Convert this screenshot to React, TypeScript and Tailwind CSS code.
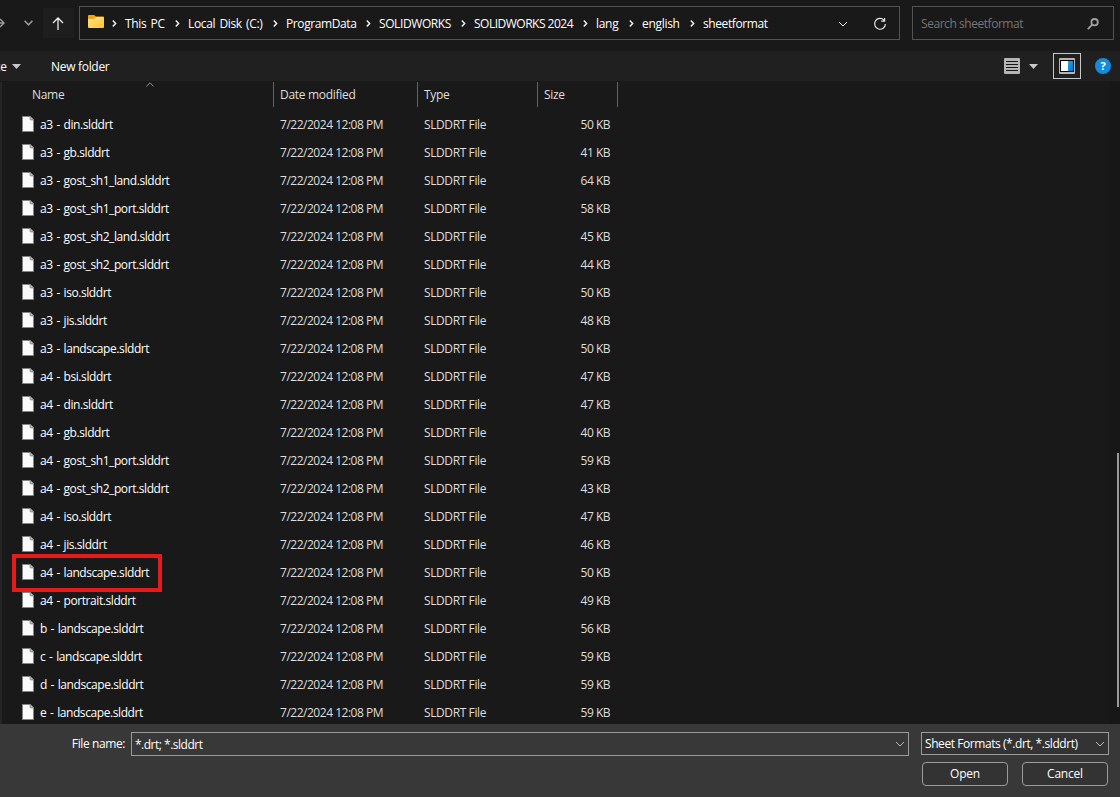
import React from 'react';

const crumbs = [
  { label: 'This PC', style: 'w-[40px] tracking-[-0.35px] [word-spacing:1.5px]' },
  { label: 'Local Disk (C:)', style: 'w-[75px] tracking-[-0.35px] [word-spacing:1.5px]' },
  { label: 'ProgramData', style: 'w-[70px] tracking-[-0.4px]' },
  { label: 'SOLIDWORKS', style: 'w-[72px] tracking-[-0.4px]' },
  { label: 'SOLIDWORKS 2024', style: 'w-[99px] tracking-[-0.5px]' },
  { label: 'lang', style: 'w-[23px] tracking-[-0.3px]' },
  { label: 'english', style: 'w-[38px] tracking-[-0.3px]' },
  { label: 'sheetformat', style: 'w-[65px] tracking-[-0.4px]' }
];

const files = [
  { name: 'a3 - din.slddrt', size: 50 },
  { name: 'a3 - gb.slddrt', size: 41 },
  { name: 'a3 - gost_sh1_land.slddrt', size: 64 },
  { name: 'a3 - gost_sh1_port.slddrt', size: 58 },
  { name: 'a3 - gost_sh2_land.slddrt', size: 45 },
  { name: 'a3 - gost_sh2_port.slddrt', size: 44 },
  { name: 'a3 - iso.slddrt', size: 50 },
  { name: 'a3 - jis.slddrt', size: 48 },
  { name: 'a3 - landscape.slddrt', size: 50 },
  { name: 'a4 - bsi.slddrt', size: 47 },
  { name: 'a4 - din.slddrt', size: 47 },
  { name: 'a4 - gb.slddrt', size: 40 },
  { name: 'a4 - gost_sh1_port.slddrt', size: 59 },
  { name: 'a4 - gost_sh2_port.slddrt', size: 43 },
  { name: 'a4 - iso.slddrt', size: 47 },
  { name: 'a4 - jis.slddrt', size: 46 },
  { name: 'a4 - landscape.slddrt', size: 50, marked: true },
  { name: 'a4 - portrait.slddrt', size: 49 },
  { name: 'b - landscape.slddrt', size: 56 },
  { name: 'c - landscape.slddrt', size: 59 },
  { name: 'd - landscape.slddrt', size: 59 },
  { name: 'e - landscape.slddrt', size: 59 }
];

const ChevronDown = ({ className = '' }: { className?: string }) => (
  <svg className={className} width="10" height="6" viewBox="0 0 10 6" fill="none" stroke="currentColor">
    <path d="M1 1l4 4 4-4" />
  </svg>
);

const Separator = () => (
  <svg className="shrink-0 ml-[10px] mr-[8px]" width="5" height="7" viewBox="0 0 5 7" fill="none" stroke="#f0f0f0" strokeWidth="1.5">
    <path d="M.8.6l2.8 2.9L.8 6.4" />
  </svg>
);

const Caret = () => (
  <svg width="9" height="5" viewBox="0 0 9 5" fill="#c8c8c8">
    <path d="M0 0h9L4.5 5z" />
  </svg>
);

const FileIcon = () => (
  <svg className="-mt-[2px] shrink-0" width="12" height="16" viewBox="0 0 12 16">
    <path d="M.5.5h7.7l3.3 3.3v11.7H.5z" fill="#fafafa" stroke="#858585" />
    <path d="M8.2.5v3.3h3.3z" fill="#d0d0d0" stroke="#858585" />
  </svg>
);

const FolderIcon = () => (
  <svg className="shrink-0" width="16" height="13" viewBox="0 0 16 13">
    <defs>
      <linearGradient id="folder" x1="0" y1="0" x2="1" y2="1">
        <stop offset="0" stopColor="#ffe08a" />
        <stop offset="1" stopColor="#ffc62f" />
      </linearGradient>
    </defs>
    <path d="M0 1a1 1 0 011-1h5.2l1.6 1.5H15a1 1 0 011 1V6H0z" fill="#f3a60a" />
    <path d="M0 4h5.8l2-2H15a1 1 0 011 1v9a1 1 0 01-1 1H1a1 1 0 01-1-1z" fill="url(#folder)" />
  </svg>
);

const NavBar = () => (
  <div className="flex h-[51px] shrink-0 pt-[6px]">
    <div className="flex h-[34px] w-[43px] shrink-0 items-center text-[#999]">
      <svg width="5" height="10" viewBox="0 0 5 10" fill="none" stroke="currentColor" strokeWidth="1.5">
        <path d="M0 1l4 4-4 4M0 5h4" />
      </svg>
      <svg className="ml-[19px]" width="9" height="6" viewBox="0 0 9 6" fill="none" stroke="currentColor" strokeWidth="1.6">
        <path d="M.6.8l3.9 4 3.9-4" />
      </svg>
    </div>
    <div className="mt-[2px] flex h-[30px] w-[31px] shrink-0 items-center justify-center bg-[#1e1e1e]">
      <svg className="-ml-[2px]" width="12" height="13" viewBox="0 0 12 13" fill="none" stroke="#f2f2f2" strokeWidth="1.25">
        <path d="M6 13V1M1 6l5-5 5 5" />
      </svg>
    </div>
    <div className="ml-[5px] flex h-[34px] w-[821px] shrink-0 items-center border border-[#535353] pl-[8px] text-white">
      <div className="-mt-[3px]"><FolderIcon /></div>
      <div className="-ml-[2px] mt-px flex items-center">
        {crumbs.map(crumb => (
          <React.Fragment key={crumb.label}>
            <Separator />
            <span className={`${crumb.style} shrink-0 whitespace-nowrap`}>{crumb.label}</span>
          </React.Fragment>
        ))}
      </div>
      <ChevronDown className="ml-auto mt-px" />
      <svg className="ml-[25px] mr-[12px] mt-px" width="14" height="14" viewBox="0 0 14 14" fill="none" stroke="#e5e5e5" strokeWidth="1.2">
        <path d="M10.9 3.1A5.4 5.4 0 1012.4 7M11.6 1v3.2H8.2" />
      </svg>
    </div>
    <div className="ml-[12px] flex h-[34px] w-[202px] shrink-0 items-center justify-between border border-[#535353] pl-[8px] pr-[14px] text-[#777]">
      <span className="mt-px tracking-[-0.45px]">Search sheetformat</span>
      <svg className="mt-px" width="12" height="12" viewBox="0 0 12 12" fill="none" stroke="#a0a0a0" strokeWidth="1.8">
        <circle cx="7.6" cy="4.2" r="3.2" />
        <path d="M5.2 6.7L.8 11.2" />
      </svg>
    </div>
  </div>
);

const Toolbar = () => (
  <div className="flex h-[30px] shrink-0 items-center bg-[#202020] text-white">
    <span className="mt-px flex w-[7px] justify-end">te</span>
    <div className="ml-[5px] mt-px"><Caret /></div>
    <span className="ml-[30px] mt-px tracking-[-0.3px]">New folder</span>
    <svg className="ml-auto" width="16" height="16" viewBox="0 0 16 16">
      <rect width="16" height="16" rx="1" fill="#b5b5b5" />
      <path d="M2 3.5h12M2 6.5h12M2 9.5h12M2 12.5h12" stroke="#151515" />
    </svg>
    <div className="ml-[9px] mt-px"><Caret /></div>
    <div className="ml-[15px] flex h-[26px] w-[28px] items-center justify-center border border-[#c8c8c8]">
      <svg width="16" height="16" viewBox="0 0 16 16">
        <defs>
          <linearGradient id="pane" x1="0" y1="0" x2="1" y2="1">
            <stop offset="0" stopColor="#2aa4e8" />
            <stop offset="1" stopColor="#0871d0" />
          </linearGradient>
        </defs>
        <rect width="16" height="16" rx="1" fill="#b5b5b5" />
        <path d="M1 2h14v12H1z" fill="#080808" />
        <path d="M2 3h7v10H2z" fill="#fff" />
        <path d="M9 3h5v10H9z" fill="url(#pane)" />
      </svg>
    </div>
    <div className="ml-[14px] mr-[9px] flex h-4 w-4 items-center justify-center rounded-full bg-[#148bdc] text-[11px] font-bold leading-4">?</div>
  </div>
);

const ColumnHeader = () => (
  <div className="flex h-[29px] tracking-[-0.3px] text-[#dedede]">
    <div className="relative flex h-[25px] w-[272px] items-center border-r border-[#636363] pl-[30px]">
      Name
      <svg className="absolute left-[144px] top-0" width="8" height="5" viewBox="0 0 8 5" fill="none" stroke="#999">
        <path d="M.4 4.4L4 .8l3.6 3.6" />
      </svg>
    </div>
    <div className="flex h-[25px] w-[144px] items-center border-r border-[#636363] pl-[6px]">Date modified</div>
    <div className="flex h-[25px] w-[120px] items-center border-r border-[#636363] pl-[6px]">Type</div>
    <div className="flex h-[25px] w-[80px] items-center border-r border-[#636363] pl-[6px]">Size</div>
  </div>
);

const FileList = () => (
  <div className="flex min-h-0 flex-1 border-t border-[#191919]">
    <div className="w-[2px] shrink-0 bg-[#252525]" />
    <div className="flex-1 overflow-hidden bg-[#191919]">
      <ColumnHeader />
      {files.map(file => (
        <div key={file.name} className="relative flex h-7 items-center whitespace-nowrap text-[#dedede]">
          {file.marked && (
            <div className="absolute -top-[5px] left-[10px] h-[38px] w-[150px] border-4 border-[#e51b1b]" />
          )}
          <div className="flex w-[278px] items-center pl-[20px] text-white">
            <FileIcon />
            <span className="ml-[6px] tracking-[-0.42px] [word-spacing:1px]">{file.name}</span>
          </div>
          <span className="w-[144px] tracking-[-0.48px]">7/22/2024 12:08 PM</span>
          <span className="w-[120px] tracking-[-0.4px]">SLDDRT File</span>
          <span className="w-[66px] text-right tracking-[-0.5px]">{file.size} KB</span>
        </div>
      ))}
    </div>
    <div className="flex w-[11px] shrink-0 items-end justify-end bg-[#171717] pb-[17px] pr-px">
      <div className="h-[254px] w-[2px] bg-[#9a9a9a]" />
    </div>
  </div>
);

const Footer = () => (
  <div className="flex h-[73px] shrink-0 bg-[#383838] pt-[8px] text-white">
    <span className="mt-[4px] w-[126px] pr-px text-right tracking-[-0.4px]">File name:</span>
    <div className="ml-[5px] flex h-[24px] w-[778px] items-center justify-between border border-[#9b9b9b] pl-[3px] pr-[3px]">
      <span className="mt-[2px] tracking-[-0.5px]">*.drt; *.slddrt</span>
      <ChevronDown className="text-[#bbb]" />
    </div>
    <div className="ml-[12px] w-[188px]">
      <div className="flex h-[23px] items-center justify-between border border-[#9b9b9b] bg-[#333] pl-[3px] pr-[3px]">
        <span className="mt-px whitespace-nowrap tracking-[-0.43px]">Sheet Formats (*.drt, *.slddrt)</span>
        <ChevronDown className="text-[#bbb]" />
      </div>
      <div className="mt-[7px] flex justify-between pl-px pr-px">
        <button className="h-[24px] w-[86px] rounded border border-[#9b9b9b] bg-[#333] tracking-[-0.2px]">Open</button>
        <button className="h-[24px] w-[86px] rounded border border-[#9b9b9b] bg-[#333] tracking-[-0.2px]">Cancel</button>
      </div>
    </div>
  </div>
);

export default function App() {
  return (
    <div className="flex h-[797px] w-[1120px] flex-col overflow-hidden bg-[#191919] font-['Open_Sans','Noto_Sans',sans-serif] text-[12px] leading-4">
      <NavBar />
      <Toolbar />
      <FileList />
      <Footer />
    </div>
  );
}
